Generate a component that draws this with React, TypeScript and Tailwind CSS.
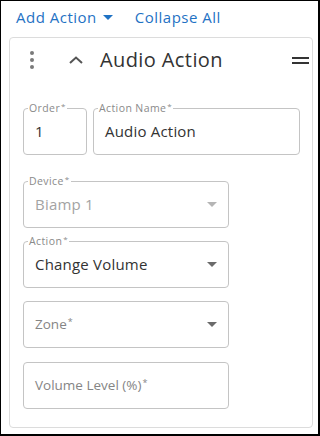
import React from 'react';

const Caret: React.FC<{ className?: string }> = ({ className }) => (
  <svg width="10" height="5" viewBox="0 0 10 5" className={className}>
    <path d="M0 0 L10 0 L5 5 Z" fill="currentColor" />
  </svg>
);

const Label: React.FC<{ text: string }> = ({ text }) => (
  <span className="absolute left-[4px] -top-[8px] bg-white px-[1px] text-[10.5px] leading-[14px] tracking-[0.4px] text-[#8a8a8a]">
    {text}
    <sup className="text-[8px] ml-[1px] -top-[3px]">*</sup>
  </span>
);

const Field: React.FC<{
  label?: string;
  value?: string;
  placeholder?: string;
  select?: boolean;
  disabled?: boolean;
  className?: string;
}> = ({ label, value, placeholder, select, disabled, className }) => (
  <div className={`relative h-[47px] rounded-[4px] border border-[#c4c4c4] flex items-center pl-[11px] pr-[11px] ${className ?? ''}`}>
    {label && <Label text={label} />}
    {value ? (
      <span className={`flex-1 text-[15px] tracking-[0.2px] ${disabled ? 'text-[#a3a3a3]' : 'text-[#333]'}`}>{value}</span>
    ) : (
      <span className="flex-1 text-[13.5px] text-[#858585]">
        {placeholder}
        <sup className="text-[9px] ml-[1px]">*</sup>
      </span>
    )}
    {select && <Caret className={disabled ? 'text-[#b5b5b5]' : 'text-[#6b6b6b]'} />}
  </div>
);

export default function App() {
  return (
    <div className="w-[320px] h-[436px] bg-white border-l border-t border-r-2 border-b-2 border-black font-['Open_Sans','Noto_Sans',sans-serif] overflow-hidden">
      <div className="h-[36px] flex items-start pt-[5px] pl-[15px] gap-[22px] text-[15px] leading-[22px] tracking-[0.5px] text-[#1f72c4]">
        <button className="flex items-center gap-[6px]">
          <span>Add Action</span>
          <Caret />
        </button>
        <button>Collapse All</button>
      </div>

      <div className="ml-[8px] w-[304px] rounded-[4px] border border-[#dcdcdc] pb-[18px]">
        <div className="h-[44px] flex items-center pl-[20px] pr-[3px]">
          <div className="flex flex-col gap-[3px] w-[4px]">
            <span className="w-[4px] h-[4px] rounded-full bg-[#7a7a7a]" />
            <span className="w-[4px] h-[4px] rounded-full bg-[#7a7a7a]" />
            <span className="w-[4px] h-[4px] rounded-full bg-[#7a7a7a]" />
          </div>
          <svg width="14" height="8" viewBox="0 0 14 8" className="ml-[35px] text-[#555]">
            <path d="M1 7 L7 1.5 L13 7" fill="none" stroke="currentColor" strokeWidth="2" />
          </svg>
          <span className="ml-[17px] text-[20px] tracking-[0.4px] text-[#333] flex-1">Audio Action</span>
          <div className="flex flex-col gap-[3px]">
            <span className="w-[17px] h-[2px] bg-[#333]" />
            <span className="w-[17px] h-[2px] bg-[#333]" />
          </div>
        </div>

        <div className="pl-[13px] pt-[26px] flex flex-col">
          <div className="flex gap-[6px]">
            <Field label="Order" value="1" className="w-[64px]" />
            <Field label="Action Name" value="Audio Action" className="w-[207px]" />
          </div>
          <Field label="Device" value="Biamp 1" select disabled className="w-[206px] mt-[26px]" />
          <Field label="Action" value="Change Volume" select className="w-[206px] mt-[13px]" />
          <Field placeholder="Zone" select className="w-[206px] mt-[13px]" />
          <Field placeholder="Volume Level (%)" className="w-[206px] mt-[14px]" />
        </div>
      </div>
    </div>
  );
}
